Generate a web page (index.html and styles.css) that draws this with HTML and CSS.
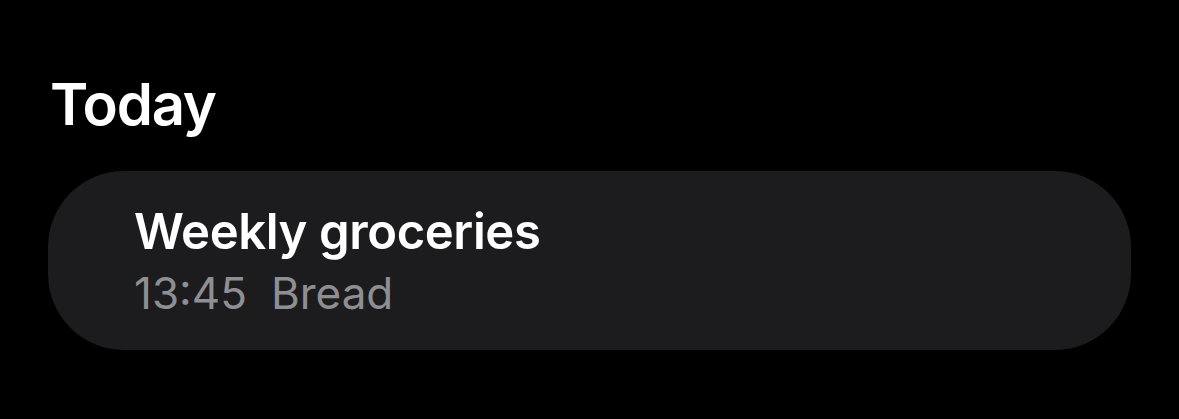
FILE: index.html
```html
<!DOCTYPE html>
<html>
<head>
<meta charset="utf-8">
<link rel="stylesheet" href="styles.css">
</head>
<body>
<main class="page">
  <h1 class="section-title">Today</h1>
  <div class="card">
    <div class="card-title">Weekly groceries</div>
    <div class="card-sub"><span class="time">13:45</span><span class="note">Bread</span></div>
  </div>
</main>
</body>
</html>
```
FILE: styles.css
```css
html, body {
  margin: 0;
  padding: 0;
  background: #000;
  height: 100%;
}
body {
  font-family: Inter, "Noto Sans", "Liberation Sans", sans-serif;
  color: #fff;
}
.page {
  padding: 68px 48px 0 48px;
  display: flex;
  flex-direction: column;
}
.section-title {
  margin: 0 0 0 2px;
  font-size: 58px;
  font-weight: 600;
  line-height: 72px;
  letter-spacing: -1.2px;
}
.card {
  margin-top: 31px;
  width: 1083px;
  height: 179px;
  box-sizing: border-box;
  background: #1c1c1e;
  border-radius: 76px;
  padding: 31px 0 0 86px;
  display: flex;
  flex-direction: column;
}
.card-title {
  font-size: 49px;
  font-weight: 600;
  line-height: 60px;
  letter-spacing: -0.4px;
}
.card-sub {
  margin-top: 3px;
  font-size: 44px;
  font-weight: 400;
  line-height: 56px;
  color: #8e8e93;
  display: flex;
  gap: 24px;
}
```
